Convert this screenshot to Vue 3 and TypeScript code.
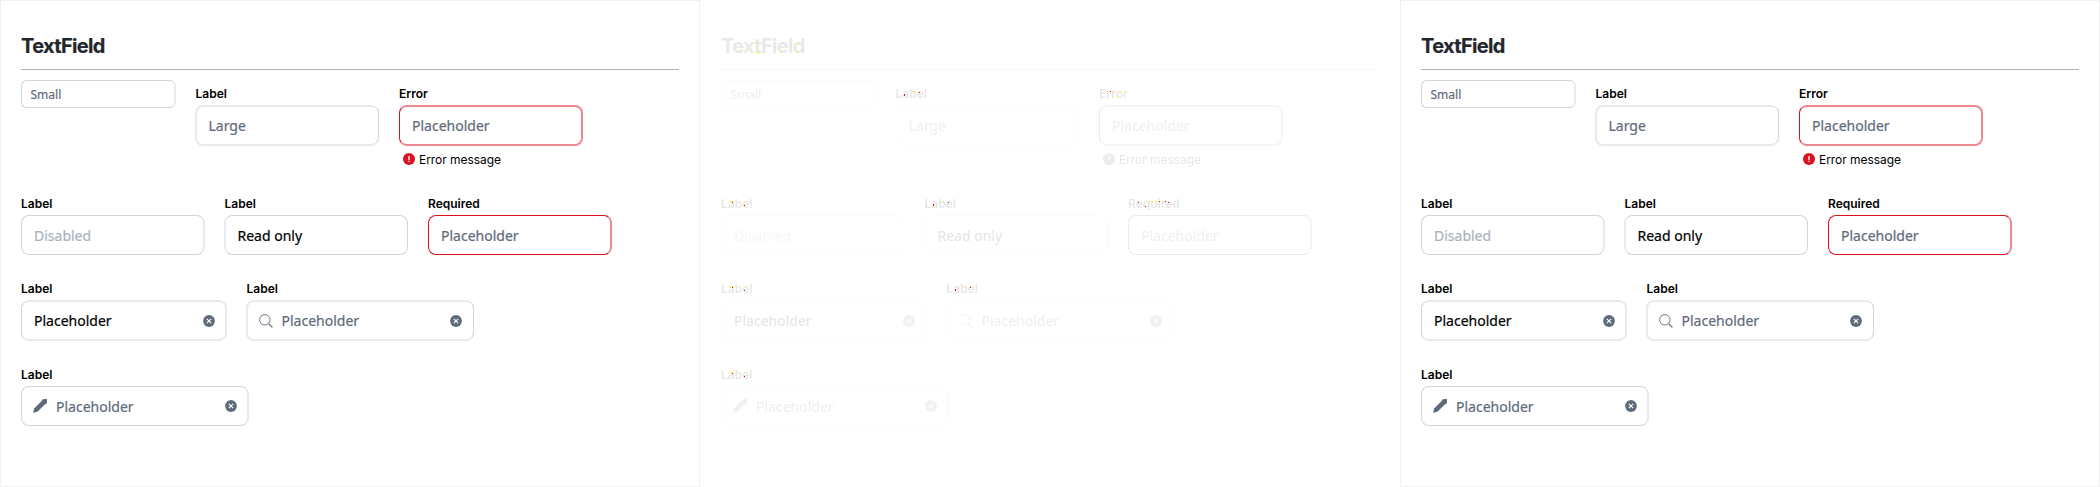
<script setup lang="ts">
interface Field {
  kind: 'small' | 'large' | 'clearable' | 'full'
  label?: string
  text: string
  tone?: 'value' | 'disabled'
  invalid?: boolean
  message?: string
  icon?: 'search' | 'edit'
  // Sides whose hairline straddles two pixels
  soft: string
}

const rows: Field[][] = [
  [
    { kind: 'small', text: 'Small', soft: 'soft-right' },
    { kind: 'large', label: 'Label', text: 'Large', soft: 'soft-y soft-left' },
    { kind: 'large', label: 'Error', text: 'Placeholder', invalid: true, message: 'Error message', soft: 'soft-y soft-right' },
  ],
  [
    { kind: 'large', label: 'Label', text: 'Disabled', tone: 'disabled', soft: 'soft-right' },
    { kind: 'large', label: 'Label', text: 'Read only', tone: 'value', soft: 'soft-left' },
    { kind: 'large', label: 'Required', text: 'Placeholder', invalid: true, soft: 'soft-right' },
  ],
  [
    { kind: 'clearable', label: 'Label', text: 'Placeholder', tone: 'value', soft: 'soft-y soft-right' },
    { kind: 'full', label: 'Label', text: 'Placeholder', icon: 'search', soft: 'soft-y soft-left' },
  ],
  [{ kind: 'full', label: 'Label', text: 'Placeholder', icon: 'edit', soft: 'soft-right' }],
]

const panels = ['before', 'diff', 'after']

// Changed pixels inside the diff panel: x, y, width, height
const minor: number[][] = [
  [52, 42, 1, 1], [47, 49, 1, 1], [56, 52, 2, 1], [58, 53, 1, 1], [81, 50, 1, 1], [98, 44, 1, 1], [97, 52, 1, 1],
  [214, 91, 1, 1], [407, 91, 1, 1], [413, 91, 1, 1], [420, 91, 1, 1], [425, 91, 1, 1], [417, 96, 1, 1],
  [30, 201, 3, 1], [45, 201, 1, 1], [243, 201, 1, 1],
  [448, 201, 2, 1], [452, 201, 1, 1], [456, 201, 1, 1], [462, 201, 1, 1],
  [30, 286, 3, 1], [45, 286, 1, 1], [265, 286, 1, 1],
  [30, 372, 3, 1], [45, 372, 1, 1],
]
const major: number[][] = [
  [204, 94, 1, 2], [219, 92, 1, 1], [410, 91, 1, 1],
  [32, 202, 1, 1], [44, 205, 1, 1], [233, 204, 1, 2], [248, 202, 1, 1],
  [438, 202, 1, 1], [445, 206, 1, 1], [459, 201, 1, 1], [465, 201, 1, 1], [468, 202, 1, 1],
  [32, 287, 1, 1], [44, 290, 1, 1], [255, 289, 1, 2], [270, 287, 1, 1],
  [32, 373, 1, 1], [44, 376, 1, 1],
]
</script>

<template>
  <main class="board">
    <div v-for="panel in panels" :key="panel" class="cell">
      <section class="panel" :class="{ faded: panel === 'diff' }">
        <h2 class="title">TextField</h2>
        <div v-for="(row, r) in rows" :key="r" class="row">
          <div v-for="(field, f) in row" :key="f" class="field" :class="[field.kind, field.soft]">
            <label v-if="field.label" class="label">{{ field.label }}</label>
            <div class="box" :class="[field.tone, { invalid: field.invalid }]">
              <svg v-if="field.icon === 'search'" class="lead" viewBox="0 0 14 14">
                <circle cx="5.8" cy="5.8" r="5.2" fill="none" stroke="currentColor" stroke-width="0.9" />
                <path d="M9.6 9.6 13.4 13.4" fill="none" stroke="currentColor" stroke-width="1.3" />
              </svg>
              <svg v-if="field.icon === 'edit'" class="lead" viewBox="0 0 14 14">
                <path d="M0.2 13.8 1.1 9.6 9.7 1 13.1.2 13.9 1 13.4 3.9 4.4 12.7Z" fill="currentColor" />
                <path d="M8.6 1.3 10 .2 13.5.1 14 .6 13.9 3.8 12.7 5.2Z" fill="currentColor" />
              </svg>
              <span class="text">{{ field.text }}</span>
              <svg v-if="field.kind === 'clearable' || field.kind === 'full'" class="reset" viewBox="0 0 12 12">
                <circle cx="6" cy="6" r="5.9" fill="currentColor" />
                <path d="M3.8 3.8 8.2 8.2M8.2 3.8 3.8 8.2" stroke="#fff" stroke-width="1.1" />
              </svg>
            </div>
            <div v-if="field.message" class="message">
              <svg class="alert" viewBox="0 0 12 12">
                <circle cx="6" cy="6" r="6" fill="#da1220" />
                <path d="M6 3V6.9M6 7.8V9" stroke="#fff" stroke-width="1.3" />
              </svg>
              <span>{{ field.message }}</span>
            </div>
          </div>
        </div>
      </section>
      <svg v-if="panel === 'diff'" class="marks" viewBox="0 0 700 487" shape-rendering="crispEdges">
        <rect v-for="(m, i) in minor" :key="'s' + i" :x="m[0]" :y="m[1]" :width="m[2]" :height="m[3]" fill="#ff0" />
        <rect v-for="(m, i) in major" :key="'h' + i" :x="m[0]" :y="m[1]" :width="m[2]" :height="m[3]" fill="#f00018" />
      </svg>
    </div>
  </main>
</template>

<style>
body {
  margin: 0;
  background: #fff;
}
</style>

<style scoped>
.board {
  display: flex;
  width: 2100px;
  height: 487px;
  overflow: hidden;
}
.cell {
  position: relative;
  width: 700px;
  height: 487px;
}
.panel {
  box-sizing: border-box;
  width: 700px;
  height: 487px;
  padding: 20px;
  border: 1px solid #f1f1f2;
  background: #fff;
  font-family: Inter, "Liberation Sans", sans-serif;
}
.faded {
  filter: grayscale(1) opacity(0.1);
}
.marks {
  position: absolute;
  inset: 0;
  width: 700px;
  height: 487px;
}
.title {
  box-sizing: border-box;
  height: 49px;
  margin: 0 0 10px;
  padding-top: 10px;
  border-bottom: 1px solid #abb4be;
  color: #23262d;
  font-size: 20px;
  font-weight: 700;
  line-height: 30px;
  letter-spacing: -0.65px;
  -webkit-text-stroke: 0.2px;
}
.row {
  display: flex;
  align-items: flex-start;
  gap: 20px;
  margin-bottom: 20px;
}
.soft-left {
  margin-left: -1px;
}
.label {
  display: block;
  box-sizing: border-box;
  height: 25px;
  padding-top: 5px;
  color: #000;
  font-size: 12px;
  font-weight: 600;
  line-height: 18px;
}
.soft-left .label {
  padding-left: 0.5px;
}
.box {
  --line: #ced5de;
  --line-soft: #e7eaef;
  display: flex;
  align-items: center;
  box-sizing: border-box;
  width: 184px;
  height: 40px;
  padding: 0 11px 0 12px;
  border: 1px solid var(--line);
  border-radius: 8px;
  color: #5f6b7a;
  font-family: "Noto Sans", sans-serif;
  font-size: 14px;
  line-height: 20px;
}
.invalid {
  --line: #da1220;
  --line-soft: #ed8890;
}
.small .box {
  width: 155px;
  height: 28px;
  padding: 0 8px 0 8.5px;
  border-radius: 6px;
  font-size: 12px;
}
.clearable .box {
  width: 206px;
}
.full .box {
  width: 228px;
}
.soft-y .box {
  height: 41px;
  border-top: 2px solid var(--line-soft);
  border-bottom: 2px solid var(--line-soft);
}
.soft-left .box {
  padding-left: 11.5px;
  border-left: 2px solid var(--line-soft);
}
.soft-right .box {
  padding-right: 10px;
  border-right: 2px solid var(--line-soft);
}
.text {
  flex: 1;
  padding-top: 1px;
  -webkit-text-stroke: 0.2px;
}
.value .text {
  color: #000;
}
.disabled .text {
  color: #abb4be;
}
.lead {
  width: 14px;
  height: 14px;
  margin: 0 9px 0 -1px;
}
.reset {
  width: 12px;
  height: 12px;
}
.soft-right .reset {
  margin-right: 0.5px;
}
.message {
  display: flex;
  align-items: center;
  gap: 4px;
  height: 24px;
  padding-left: 4px;
  color: #000;
  font-size: 12px;
  line-height: 18px;
  letter-spacing: -0.05px;
}
.message span {
  padding-top: 4px;
}
.alert {
  width: 12px;
  height: 12px;
  margin-top: 2px;
}
</style>
